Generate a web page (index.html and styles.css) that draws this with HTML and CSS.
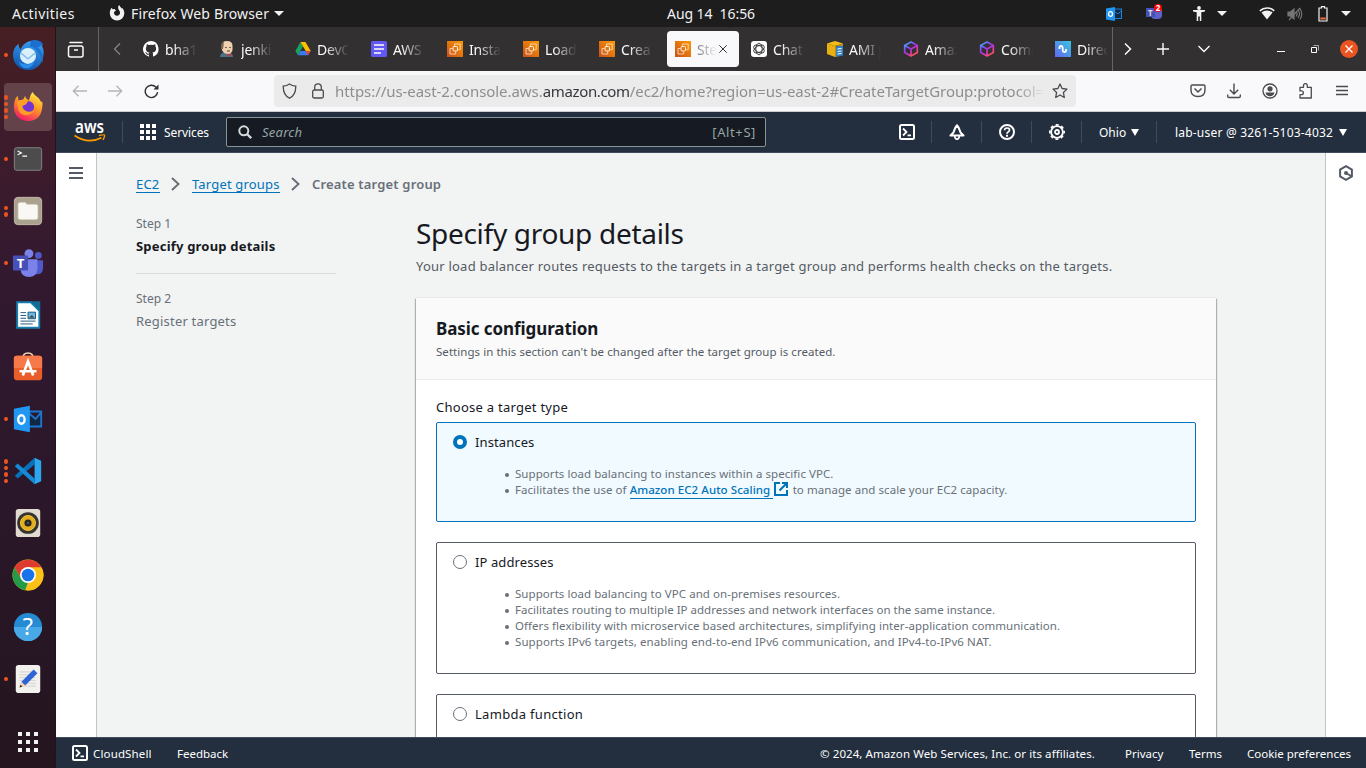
FILE: index.html
```html
<!DOCTYPE html>
<html lang="en">
<head>
<meta charset="utf-8">
<title>Create target group</title>
<link rel="stylesheet" href="styles.css">
</head>
<body>
<svg class="defs" aria-hidden="true">
  <defs>
    <linearGradient id="orange" x1="0" y1="1" x2="1" y2="0"><stop offset="0" stop-color="#c8511b"/><stop offset="1" stop-color="#ff9900"/></linearGradient>
    <linearGradient id="cube" x1="0" y1="0" x2="0.7" y2="1"><stop offset="0" stop-color="#20c5f5"/><stop offset=".5" stop-color="#a82cf5"/><stop offset="1" stop-color="#ff4f5f"/></linearGradient>
    <linearGradient id="fire" x1=".8" y1="0" x2=".3" y2="1"><stop offset="0" stop-color="#fff04a"/><stop offset=".45" stop-color="#ff9a24"/><stop offset="1" stop-color="#f5156b"/></linearGradient>
    <linearGradient id="wave" x1="0" y1="1" x2="1" y2="0"><stop offset="0" stop-color="#6366f1"/><stop offset="1" stop-color="#38c7e0"/></linearGradient>
    <linearGradient id="bird" x1=".7" y1="0" x2=".4" y2="1"><stop offset="0" stop-color="#3a9ff5"/><stop offset="1" stop-color="#0f56ac"/></linearGradient>
  </defs>
  <symbol id="ec2" viewBox="0 0 16 16"><path fill="url(#orange)" d="M0 0h16v16H0z"/><g fill="none" stroke="#fff" stroke-width=".9"><rect x="6" y="5.500" width="4.500" height="4.500" rx="1"/><path opacity=".75" d="M7.500 5V3h5.700v5.700h-2M5.500 7.500H3v5.500h5.700v-2.500"/></g></symbol>
  <symbol id="cubeicon" viewBox="0 0 16 16"><path fill="none" stroke="url(#cube)" stroke-width="1.700" stroke-linejoin="round" d="M8 1l6.300 3.500v7L8 15l-6.300-3.500v-7zM1.700 4.500L8 8l6.300-3.500M8 8v7"/></symbol>
  <symbol id="shell" viewBox="0 0 16 16"><rect x="1" y="1" width="14" height="14" rx="1.500" fill="none" stroke="#fff" stroke-width="2"/><path fill="none" stroke="#fff" stroke-width="1.800" d="M4 4.500L7.500 8 4 11.500M8.500 11.300H12"/></symbol>
</svg>

<header class="topbar">
  <span class="activities">Activities</span>
  <svg class="ff-mini" viewBox="0 0 16 16"><path fill="#f2f2f2" d="M8 15.500A7.200 7.200 0 0 1 .8 8.300C.8 5.800 1.600 4 2.800 2.700l.7 1.600 2-.3L7 5.500 5 7c-.3 2.500 1.400 4 3.300 3.800 2.200-.2 3.300-2.200 2.500-4.300C10.200 5 8.800 4 9.200 1.500 9.500 1 9.800.5 10.200.1c.5 1.600 2 2.400 2.600 3.400l.5-.5c1.300 1.500 2 3.300 2 5.300A7.200 7.200 0 0 1 8 15.500z"/></svg>
  <span class="appname">Firefox Web Browser</span>
  <i class="tri app-tri"></i>
  <span class="clock">Aug 14&nbsp; 16:56</span>
  <div class="tray">
    <svg class="t-outlook" viewBox="0 0 16 14"><rect x="8" y="2" width="7.500" height="9.500" fill="#102840" stroke="#1f7fd8" stroke-width="1"/><path d="M8 4l4 3 3-3" fill="none" stroke="#1f7fd8"/><path fill="#2196f3" d="M0 1.500L9 0v14L0 12.500z"/><ellipse cx="4.500" cy="7" rx="2" ry="2.400" fill="none" stroke="#fff" stroke-width="1.300"/></svg>
    <svg class="t-teams" viewBox="0 0 17 17"><path fill="#5b62c9" d="M5 6h11v5a4 4 0 0 1-4 4H9a4 4 0 0 1-4-4z"/><path fill="#4650b5" d="M0 4h9v9H0z"/><text x="2" y="11.500" font-size="8" font-weight="700" fill="#ddd">T</text><circle cx="12" cy="4" r="4" fill="#f00"/><text x="9.800" y="7" font-size="8" font-weight="700" fill="#fff">2</text></svg>
    <svg class="t-access" viewBox="0 0 12 15"><g fill="#f2f2f2"><circle cx="6" cy="2" r="1.900"/><path d="M0 4h12v1.500L8.300 6.300V15H6.800v-4.500H5.200V15H3.700V6.300L0 5.500z"/></g></svg>
    <i class="tri"></i>
    <svg class="t-wifi" viewBox="0 0 16 13"><path fill="#f2f2f2" d="M8 12.500L2.500 5.600a8.500 8.500 0 0 1 11 0z"/><path fill="none" stroke="#f2f2f2" stroke-width="1.600" d="M.8 3.800a10.500 10.500 0 0 1 14.400 0"/></svg>
    <svg class="t-vol" viewBox="0 0 16 14"><g stroke="#757575" fill="none" stroke-width="1.200"><path fill="#757575" d="M1 5h2.500L7 2v10L3.500 9H1z"/><path d="M9 4.500q2 2.500 0 5M11 3q3 4 0 8M13 1.500q3.500 5.500 0 11M2 13L13 1"/></g></svg>
    <svg class="t-bat" viewBox="0 0 10 16"><path fill="none" stroke="#f2f2f2" stroke-width="1.200" d="M1 2h2.500V.7h3V2H9v13H1z"/><path fill="#f26a3a" d="M2.300 11.500h5.400v2H2.300z"/></svg>
    <i class="tri"></i>
  </div>
</header>

<div class="desktop">
<nav class="dock">
  <div class="app"><span class="dots"><i></i></span>
    <svg viewBox="0 0 34 34"><path fill="url(#bird)" d="M1 17c0-5 2-9 6-12 0 3 1 5 2 6C12 4 19 0 27 2c4 1 6 3 5 6 2 3 2 7 1 11-1 8-8 14-16 14S1 27 1 17z"/><path fill="#1a6fd0" d="M20 2c6-2 12 0 13 4l-6 3c5 4 7 10 5 17-1-10-6-17-13-18z"/><circle cx="17" cy="18" r="8.500" fill="#d9effc"/><path d="M9.500 15l7.500 6 7.500-6" fill="none" stroke="#86bfe9" stroke-width="1.500"/><path fill="#2b8eea" d="M7 24c5 4 12 4 17-1-1 6-6 9-11 8-3-1-5-4-6-7z"/></svg></div>
  <div class="app current"><span class="dots"><i></i><i></i><i></i><i></i></span>
    <svg viewBox="0 0 34 34"><path fill="url(#fire)" d="M17 32C8 32 2 25 2 17.500 2 12 3 8 6 5l1 5 5-1 2-4c0 2 2 4 4 5 1-4 2-7 4-9 2 5 7 5 9 11l1-1c1 3 0 10-2 14-2 4-7 7-13 7z"/><circle cx="17" cy="17" r="6.500" fill="#7434cf"/><path fill="#ff9e24" d="M5 12c3-3 8-4 12-1l-2 3-4 2c1 6 8 8 13 4-3 7-13 8-17 1z"/></svg></div>
  <div class="app"><span class="dots"><i></i></span>
    <svg viewBox="0 0 34 34"><rect x="2.500" y="5" width="29" height="24" rx="2.500" fill="#4b4c4b" stroke="#858585"/><path d="M6 8.500l4 2-4 2M11 14h5" fill="none" stroke="#fff" stroke-width="1.200"/></svg></div>
  <div class="app"><span class="dots"><i></i><i></i></span>
    <svg viewBox="0 0 34 34"><rect x="2.500" y="2.500" width="29" height="29" rx="4" fill="#aaa18e" stroke="#c3bba9"/><path fill="#faf8f5" stroke="#dcd4c4" stroke-width=".7" d="M6.500 10q0-2 2-2h5q2 0 2 2h10q2 0 2 2v12q0 2-2 2h-17q-2 0-2-2z"/></svg></div>
  <div class="app"><span class="dots"><i></i></span>
    <svg viewBox="0 0 34 34"><circle cx="28" cy="9" r="3.600" fill="#5059c9"/><circle cx="18" cy="7" r="4.700" fill="#7b83eb"/><path fill="#5059c9" d="M23 14h10v8q0 7-7 7h-3z"/><path fill="#7b83eb" d="M9 13h18v11q-1 8-9 8t-9-8z"/><rect x="1" y="9" width="16" height="16" rx="1" fill="#4650b8"/><text class="icon-letter" x="5" y="22" font-size="14" fill="#fff">T</text></svg></div>
  <div class="app">
    <svg viewBox="0 0 34 34"><path fill="#fff" stroke="#167fae" stroke-width="2" d="M5.500 3.500H20l9 9v18H5.500z"/><path fill="#136b94" d="M20 2.500l10 10.500V2.500z"/><path stroke="#17527a" d="M9 14.500h6M9 17.500h6M9 20.500h6M9 23.500h16M9 26.500h13"/><path fill="#66b9e5" stroke="#17527a" d="M17 14h8v7h-8z"/><path fill="#594437" d="M18 20l3-3 3 3z"/></svg></div>
  <div class="app">
    <svg viewBox="0 0 34 34"><path d="M11.500 8q0-6 5.500-6t5.500 6" fill="none" stroke="#f4d6ad" stroke-width="1.600"/><rect x="2" y="5" width="30" height="26" rx="3" fill="#e95d2a"/><path fill="#f7794a" d="M2 18h30V8q0-3-3-3H5Q2 5 2 8z"/><path d="M11.500 26l5.500-15 5.500 15M8 21.500h18" fill="none" stroke="#fff" stroke-width="2.800"/></svg></div>
  <div class="app"><span class="dots"><i></i></span>
    <svg viewBox="0 0 34 34"><path d="M17 9h14v16H17zM17 10l8 7 6-7" fill="#102840" stroke="#1976d2" stroke-width="2"/><path fill="#2196f3" d="M2 6l17-3v28L2 28z"/><ellipse cx="10" cy="17.500" rx="3.400" ry="4.500" fill="none" stroke="#fff" stroke-width="2.500"/></svg></div>
  <div class="app"><span class="dots"><i></i><i></i><i></i><i></i></span>
    <svg viewBox="0 0 34 34"><path fill="#0872b9" d="M3 22l3 3 18-15V3z"/><path fill="#168bd5" d="M3 12l3-3 18 16v6z"/><path fill="#2ba7ef" d="M24 3l7 3v22l-7 3z"/></svg></div>
  <div class="app">
    <svg viewBox="0 0 34 34"><rect x="4" y="2" width="26" height="30" rx="3" fill="#e1dad1"/><circle cx="17" cy="17" r="11.500" fill="#36342e"/><circle cx="17" cy="17" r="8" fill="#e2ae20" stroke="#f5c63a"/><circle cx="17" cy="17" r="3.800" fill="#252525"/><circle cx="17" cy="17" r="1.300" fill="#555"/></svg></div>
  <div class="app">
    <svg viewBox="0 0 34 34"><circle cx="17" cy="17" r="16.500" fill="#fbc116"/><path fill="#dd3b30" d="M2.700 9A16.500 16.500 0 0 1 31.300 9H17l-7 12z"/><path fill="#249b49" d="M2.700 9l7.300 12 7 4-3 8.300A16.500 16.500 0 0 1 2.700 9z"/><path fill="#fbc116" d="M17 9h14.300A16.500 16.500 0 0 1 16 33.500l7.500-12.500z"/><circle cx="17" cy="17" r="8.500" fill="#fff"/><circle cx="17" cy="17" r="6.700" fill="#1a73e8"/></svg></div>
  <div class="app">
    <svg viewBox="0 0 34 34"><circle cx="17" cy="17" r="15" fill="#258bd2"/><path fill="#49a9e6" d="M2 17h30a15 15 0 0 1-30 0z"/><text x="11.500" y="26" font-size="25" fill="#fff">?</text></svg></div>
  <div class="app"><span class="dots"><i></i></span>
    <svg viewBox="0 0 34 34"><rect x="4" y="2" width="26" height="30" rx="3" fill="#f3f1ee"/><path stroke="#d1cfcd" d="M8 9.500h17M8 12.500h17M8 15.500h17M8 18.500h17M8 21.500h17M8 24.500h17"/><path fill="#fbd2a3" d="M8 26l2-6 4 4z"/><path fill="#2d63d6" d="M10 20L23 7l4 4-13 13z"/><path fill="#222" d="M8 26l1-3 2 2z"/></svg></div>
  <svg class="grid-icon" viewBox="0 0 20 20"><path fill="#f2f2f2" d="M0 0h4v4H0zM8 0h4v4H8zM16 0h4v4h-4zM0 8h4v4H0zM8 8h4v4H8zM16 8h4v4h-4zM0 16h4v4H0zM8 16h4v4H8zM16 16h4v4h-4z"/></svg>
</nav>

<main class="browser">
  <div class="tabs">
    <div class="tab-start"><svg viewBox="0 0 18 18"><path d="M3 1.500h12" stroke="#fbfbfe" stroke-width="1.500" stroke-linecap="round"/><rect x="1.500" y="5" width="14.500" height="11" rx="2" fill="none" stroke="#fbfbfe" stroke-width="1.500"/><path d="M7 9h4" stroke="#fbfbfe" stroke-width="1.500"/></svg></div>
    <svg class="scroll-left" viewBox="0 0 8 14"><path d="M7 1.500L1.500 7 7 12.500" fill="none" stroke="#858487" stroke-width="1.300"/></svg>
    <div class="tablist">
      <div class="tab"><svg viewBox="0 0 16 16"><path fill="#fff" d="M8 0a8 8 0 0 0-2.500 15.600c.4.100.5-.2.500-.4v-1.500c-2.200.5-2.700-1-2.700-1-.4-.9-.9-1.200-.9-1.200-.7-.5.1-.5.100-.5.800.1 1.200.8 1.200.8.700 1.300 1.900.9 2.300.7.100-.5.300-.9.500-1.100-1.800-.2-3.600-.9-3.600-4 0-.9.300-1.600.8-2.100-.1-.2-.4-1 .1-2.100 0 0 .7-.2 2.200.8a7.500 7.500 0 0 1 4 0c1.500-1 2.200-.8 2.200-.8.400 1.100.2 1.900.1 2.100.5.600.8 1.300.8 2.100 0 3.100-1.900 3.700-3.700 3.900.3.300.6.800.6 1.500v2.200c0 .2.100.5.500.4A8 8 0 0 0 8 0z"/></svg><span>bha1</span></div>
      <div class="tab"><svg viewBox="0 0 16 16"><path fill="#4d7286" d="M1 16q0-4 4-4.500h5q4 .5 4 4.500z"/><path fill="#efd1ae" d="M2.500 5q0-5 5.500-5t5.500 5v4q-1 4-4.500 4-4.500 0-6-4z"/><path fill="#7d6450" d="M2 8q-.500-6 3-8L4.500 5 4 8zM6 6h2v1H6zM10 6h2v1h-2z"/><path fill="#c43a3a" d="M8 12.500l2 1 2-1v3l-2-1-2 1z"/><path d="M8 10h3" stroke="#5b3b2a"/></svg><span>jenki</span></div>
      <div class="tab"><svg viewBox="0 0 16 16"><path fill="#18a35a" d="M5.500 1L8 5.300 3 14.300.4 10z"/><path fill="#ffbf00" d="M5.500 1h5l5.200 9h-5z"/><path fill="#397bf0" d="M3 14.300L5.500 10h10.200L13 14.300z"/><path fill="#e94335" d="M10.700 10h5L13 14.300z"/></svg><span>DevO</span></div>
      <div class="tab"><svg viewBox="0 0 16 16"><rect width="16" height="16" rx="1.500" fill="#6259f5"/><path d="M3 4h10M3 8h10M3 12h7" stroke="#fff" stroke-width="1.700"/></svg><span>AWS</span></div>
      <div class="tab"><svg><use href="#ec2"/></svg><span>Insta</span></div>
      <div class="tab"><svg><use href="#ec2"/></svg><span>Load</span></div>
      <div class="tab"><svg><use href="#ec2"/></svg><span>Crea</span></div>
      <div class="tab active"><svg><use href="#ec2"/></svg><span>Ste</span><svg class="close" viewBox="0 0 8 8"><path d="M.3.300l7.400 7.400M7.700.300L.3 7.700" stroke="#333" stroke-width="1"/></svg></div>
      <div class="tab"><svg viewBox="0 0 16 16"><rect width="16" height="16" rx="3" fill="#fff"/><g fill="none" stroke="#222" stroke-width=".8"><ellipse cx="8" cy="8" rx="3.200" ry="5.800"/><ellipse cx="8" cy="8" rx="3.200" ry="5.800" transform="rotate(60 8 8)"/><ellipse cx="8" cy="8" rx="3.200" ry="5.800" transform="rotate(120 8 8)"/></g></svg><span>Chat</span></div>
      <div class="tab"><svg viewBox="0 0 16 16"><path fill="#f5bd18" d="M0 2.500L8 0l8 2.500L8 5z"/><path fill="#eab010" d="M0 2.500L8 5v11l-8-3z"/><path fill="#c58d0a" d="M8 5l8-2.500V5H9v11H8z"/><path fill="#3281c4" d="M9 5.500l7-1v10L9 16z"/><path d="M10.500 8l4-.6M10.500 10.500l4-.5M10.500 13l4-.6" stroke="#fff"/></svg><span>AMI p</span></div>
      <div class="tab"><svg><use href="#cubeicon"/></svg><span>Amaz</span></div>
      <div class="tab"><svg><use href="#cubeicon"/></svg><span>Comp</span></div>
      <div class="tab last"><svg viewBox="0 0 16 16"><path fill="url(#wave)" d="M0 0h16v16H0z"/><path d="M4.500 8V6.500q0-1.500 1.500-1.500t1.700 1.500v3q.2 1.500 1.800 1.500t1.500-1.500V8" fill="none" stroke="#fff" stroke-width="1.800"/></svg><span>Direc</span></div>
    </div>
    <div class="tab-tools">
      <svg class="w-next" viewBox="0 0 8 14"><path d="M1 1.500L6.500 7 1 12.500" fill="none" stroke="#fbfbfe" stroke-width="1.500"/></svg>
      <svg class="w-plus" viewBox="0 0 12 12"><path d="M6 0v12M0 6h12" stroke="#fbfbfe" stroke-width="1.400"/></svg>
      <svg class="w-down" viewBox="0 0 14 8"><path d="M1.500 1L7 6.500 12.500 1" fill="none" stroke="#fbfbfe" stroke-width="1.400"/></svg>
      <svg class="w-min" viewBox="0 0 8 8"><path d="M0 6.500h8" stroke="#fff"/></svg>
      <svg class="w-max" viewBox="0 0 8 8"><path d="M.5 2.500h5v5h-5z" fill="none" stroke="#fff"/><path d="M2.500.5h5v5" fill="none" stroke="#aaa"/></svg>
      <svg class="w-close" viewBox="0 0 18 18"><circle cx="9" cy="9" r="9" fill="#e95420"/><path d="M5.500 5.500l7 7M12.500 5.500l-7 7" stroke="#fff" stroke-width="1.300"/></svg>
    </div>
  </div>

  <div class="toolbar">
    <svg class="back" viewBox="0 0 15 12"><path d="M15 6H1.500M6.500.8L1.300 6l5.200 5.200" fill="none" stroke="#b4b4b6" stroke-width="1.300"/></svg>
    <svg class="fwd" viewBox="0 0 15 12"><path d="M0 6h13.500M8.500.8L13.700 6l-5.200 5.200" fill="none" stroke="#b4b4b6" stroke-width="1.300"/></svg>
    <svg class="reload" viewBox="0 0 15 15"><path d="M13.600 8.200A6.200 6.200 0 1 1 12 3.200" fill="none" stroke="#2f2e33" stroke-width="1.400"/><path fill="#2f2e33" d="M14.500.5v5H9.500z"/></svg>
    <div class="urlbar">
      <svg class="shield" viewBox="0 0 15 16"><path d="M7.500 1c2 1.500 4 2 6.300 2.200 0 5.500-1 9.500-6.300 12C2.200 12.700 1.200 8.700 1.200 3.200 3.500 3 5.500 2.500 7.500 1z" fill="none" stroke="#4a4a4f" stroke-width="1.300"/></svg>
      <svg class="lock" viewBox="0 0 12 16"><rect x=".7" y="7" width="10.600" height="8" rx="1.500" fill="none" stroke="#4a4a4f" stroke-width="1.300"/><path d="M2.700 7V4.200a3.300 3.300 0 0 1 6.600 0V7" fill="none" stroke="#4a4a4f" stroke-width="1.300"/></svg>
      <span class="url">https://us-east-2.console.aws.<b>amazon.com</b>/ec2/home?region=us-east-2#CreateTargetGroup:protocol=</span>
      <svg class="star" viewBox="0 0 16 16"><path d="M8 1l2.100 4.500 4.900.6-3.600 3.400.9 5L8 12l-4.300 2.500.9-5L1 6.100l4.900-.6z" fill="none" stroke="#4a4a4f" stroke-width="1.300" stroke-linejoin="round"/></svg>
    </div>
    <div class="tools">
      <svg viewBox="0 0 16 16"><path d="M2.300 2h11.400q1.300 0 1.300 1.300V7q0 6.500-7 6.500T1 7V3.300Q1 2 2.300 2z" fill="none" stroke="#4a4a4f" stroke-width="1.400"/><path d="M4.500 5.500L8 9l3.500-3.500" fill="none" stroke="#4a4a4f" stroke-width="1.500"/></svg>
      <svg viewBox="0 0 16 16"><path d="M8 .5v10.300M3.800 6.800L8 11l4.200-4.200M1.700 11.500v1.700q0 1.300 1.300 1.300h10q1.300 0 1.300-1.300v-1.700" fill="none" stroke="#4a4a4f" stroke-width="1.400"/></svg>
      <svg viewBox="0 0 16 16"><circle cx="8" cy="8" r="7" fill="none" stroke="#4a4a4f" stroke-width="1.300"/><circle cx="8" cy="5.800" r="2.600" fill="#4a4a4f"/><path fill="#4a4a4f" d="M3.500 9.500h9q-1 3.800-4.500 3.800T3.500 9.500z"/></svg>
      <svg viewBox="0 0 16 16"><path d="M2 4.300h3.500V2.500a1.900 1.900 0 0 1 3.800 0v1.800h4V15H2v-3.300h1.500a1.900 1.900 0 0 0 0-3.800H2z" fill="none" stroke="#4a4a4f" stroke-width="1.300" stroke-linejoin="round"/></svg>
      <svg viewBox="0 0 16 16"><path d="M2 3.500h12M2 7.500h12M2 11.500h12" stroke="#4a4a4f" stroke-width="1.300"/></svg>
    </div>
  </div>

  <div class="awsnav">
    <svg class="logo" viewBox="0 0 32 22"><text x="1" y="12.300" font-size="17" font-weight="600" fill="#fff" textLength="29" lengthAdjust="spacingAndGlyphs">aws</text><path d="M.5 14.500q13.500 9 27 2.300" fill="none" stroke="#ff9900" stroke-width="1.800"/><path d="M25 14.500q5.300-1.300 5.600-.3.200 1.400-1.500 4.800" fill="none" stroke="#ff9900" stroke-width="1.400"/></svg>
    <i class="sep sep-logo"></i>
    <svg class="services-icon" viewBox="0 0 16 16"><path fill="#fff" d="M0 0h4v4H0zM6 0h4v4H6zM12 0h4v4h-4zM0 6h4v4H0zM6 6h4v4H6zM12 6h4v4h-4zM0 12h4v4H0zM6 12h4v4H6zM12 12h4v4h-4z"/></svg>
    <span class="services">Services</span>
    <div class="search">
      <svg viewBox="0 0 14 14"><circle cx="5.800" cy="5.800" r="4.500" fill="none" stroke="#d5dbdb" stroke-width="2"/><path d="M9 9l4.200 4.200" stroke="#d5dbdb" stroke-width="2.300"/></svg>
      <em>Search</em><span class="hint">[Alt+S]</span>
    </div>
    <div class="nav-icons">
      <span><svg><use href="#shell"/></svg></span>
      <span><svg viewBox="0 0 16 16"><path d="M8 1.300C6 3.300 5.500 6 4.500 8.500L1.500 11.500h13l-3-3C10.500 6 10 3.300 8 1.300z" fill="none" stroke="#fff" stroke-width="2" stroke-linejoin="round"/><path d="M5.700 12q.2 3.200 2.300 3.200t2.300-3.200" fill="none" stroke="#fff" stroke-width="1.700"/></svg></span>
      <span><svg viewBox="0 0 16 16"><circle cx="8" cy="8" r="7" fill="none" stroke="#fff" stroke-width="2"/><path d="M5.600 6.300q0-2.300 2.500-2.300t2.400 2q0 1.200-1.400 1.900Q8 8.400 8 9.700" fill="none" stroke="#fff" stroke-width="1.700"/><path fill="#fff" d="M7 10.700h2v2H7z"/></svg></span>
      <span><svg viewBox="0 0 16 16"><circle cx="8" cy="8" r="5.900" fill="none" stroke="#fff" stroke-width="1.900"/><circle cx="8" cy="8" r="7.200" fill="none" stroke="#fff" stroke-width="1.600" stroke-dasharray="3 2.655" stroke-dashoffset="1.500"/><circle cx="8" cy="8" r="2" fill="none" stroke="#fff" stroke-width="1.800"/></svg></span>
    </div>
    <span class="region">Ohio</span><i class="dtri"></i>
    <i class="sep sep-user"></i>
    <span class="user">lab-user @ 3261-5103-4032</span><i class="dtri"></i>
  </div>

  <div class="page">
    <aside class="rail"><svg viewBox="0 0 14 12"><path fill="#545b64" d="M0 0h14v2H0zM0 5h14v2H0zM0 10h14v2H0z"/></svg></aside>
    <section class="content">
      <div class="crumbs"><a>EC2</a><svg viewBox="0 0 9 14"><path d="M1 1l6.500 6L1 13" fill="none" stroke="#687078" stroke-width="2"/></svg><a class="c2">Target groups</a><svg viewBox="0 0 9 14"><path d="M1 1l6.500 6L1 13" fill="none" stroke="#687078" stroke-width="2"/></svg><b>Create target group</b></div>
      <div class="wizard">
        <div class="steps">
          <div class="step first"><small>Step 1</small><strong>Specify group details</strong></div>
          <div class="step"><small>Step 2</small><span>Register targets</span></div>
        </div>
        <div class="form">
          <h1>Specify group details</h1>
          <p class="lead">Your load balancer routes requests to the targets in a target group and performs health checks on the targets.</p>
          <div class="card">
            <div class="card-head"><h2>Basic configuration</h2><p>Settings in this section can't be changed after the target group is created.</p></div>
            <div class="card-body">
              <div class="label">Choose a target type</div>
              <div class="option selected">
                <div class="opt-title"><i class="radio"></i><span>Instances</span></div>
                <ul><li><span class="a1">Supports load balancing to instances within a specific VPC.</span></li><li><span>Facilitates the use of</span> <a>Amazon EC2 Auto Scaling</a><svg viewBox="0 0 14 14"><path d="M6 1H1v12h12V8M8 1h5v5M13 1L5.500 8.500" fill="none" stroke="#0073bb" stroke-width="2"/></svg> <span>to manage and scale your EC2 capacity.</span></li></ul>
              </div>
              <div class="option">
                <div class="opt-title"><i class="radio"></i><span>IP addresses</span></div>
                <ul><li><span>Supports load balancing to VPC and on-premises resources.</span></li><li><span class="b2">Facilitates routing to multiple IP addresses and network interfaces on the same instance.</span></li><li><span>Offers flexibility with microservice based architectures, simplifying inter-application communication.</span></li><li><span class="b4">Supports IPv6 targets, enabling end-to-end IPv6 communication, and IPv4-to-IPv6 NAT.</span></li></ul>
              </div>
              <div class="option"><div class="opt-title"><i class="radio"></i><span class="lambda">Lambda function</span></div></div>
            </div>
          </div>
        </div>
      </div>
    </section>
    <aside class="rail right"><svg viewBox="0 0 16 16"><path d="M8 1.200l5.900 3.400v6.800L8 14.800l-5.900-3.400V4.600z" fill="none" stroke="#545b64" stroke-width="2"/><circle cx="8" cy="8" r="2" fill="#545b64"/><path d="M8 8l5 3" stroke="#545b64" stroke-width="2"/></svg></aside>
  </div>

  <footer class="footer">
    <svg><use href="#shell"/></svg><span class="f1">CloudShell</span><span class="f2">Feedback</span>
    <span class="f3">© 2024, Amazon Web Services, Inc. or its affiliates.</span><span class="f4">Privacy</span><span class="f5">Terms</span><span class="f6">Cookie preferences</span>
  </footer>
</main>
</div>
</body>
</html>
```
FILE: styles.css
```css
* { box-sizing: border-box; }
body { margin: 0; width: 1366px; height: 768px; overflow: hidden; font-family: "Noto Sans", "Open Sans", sans-serif; font-size: 13px; white-space: nowrap; background: #fff; }
svg { display: block; flex: none; }
svg text { font-family: "Noto Sans", sans-serif; }
i { font-style: normal; }
.defs { width: 0; height: 0; position: absolute; }
h1, h2, p, ul { margin: 0; padding: 0; }
.icon-letter { font-weight: 700; }

.topbar { height: 27px; background: #1d1d1d; color: #f2f2f2; display: flex; align-items: center; padding-left: 12px; font-size: 14px; }
.activities { width: 97px; letter-spacing: .45px; }
.ff-mini { width: 16px; height: 16px; margin-right: 6px; margin-top: -2px; }
.appname { width: 139px; letter-spacing: .14px; }
.tri { width: 0; height: 0; border: 5px solid transparent; border-top-color: #f2f2f2; border-bottom: 0; flex: none; }
.app-tri { margin-left: 4px; }
.clock { margin-left: 383px; width: 90px; letter-spacing: -0.07px; }
.tray { display: flex; align-items: center; margin-left: 349px; flex: none; }
.t-outlook { width: 16px; height: 14px; }
.t-teams { width: 17px; height: 17px; margin-left: 24px; margin-top: -3px; overflow: visible; }
.t-access { width: 12px; height: 15px; margin: 0 12px 0 30px; }
.t-wifi { width: 16px; height: 13px; margin-left: 32px; }
.t-vol { width: 16px; height: 14px; margin-left: 12px; }
.t-bat { width: 10px; height: 16px; margin: 0 13px 0 15px; }

.desktop { display: flex; height: 741px; }
.dock { width: 56px; background: linear-gradient(#461f23, #3f1c2b 14%, #321930 35%, #2b172a 60%, #24151f); padding-left: 4px; border-right: 1px solid #24121b; }
.app { width: 48px; height: 48px; margin-bottom: 4px; border-radius: 4px; display: grid; place-items: center; position: relative; }
.app:first-child { margin-top: 4px; }
.app svg { width: 32px; height: 32px; }
.app.current { background: #634349; }
.dots { position: absolute; left: 0; top: 0; height: 48px; display: flex; flex-direction: column; justify-content: center; gap: 2px; }
.dots i { width: 4px; height: 4.500px; border-radius: 50%; background: #e95420; }
.grid-icon { width: 20px; height: 20px; margin: 29px 0 0 14px; }

.browser { width: 1310px; display: flex; flex-direction: column; }
.tabs { height: 44px; background: #323031; display: flex; align-items: center; color: #fbfbfe; }
.tab-start { width: 43px; height: 44px; border-right: 1px solid #666466; padding: 14px 0 0 11px; }
.tab-start svg { width: 18px; height: 18px; }
.scroll-left { width: 8px; height: 14px; margin-left: 14px; }
.tablist { display: flex; margin-left: 14px; gap: 4px; width: 978px; height: 44px; align-items: center; border-right: 1px solid #666466; }
.tab { width: 72px; height: 36px; padding-left: 8px; display: flex; align-items: center; font-size: 14px; border-radius: 4px; }
.tab > svg { width: 16px; height: 16px; margin-right: 6px; }
.tab span { width: 32px; overflow: hidden; letter-spacing: -.2px; mask-image: linear-gradient(90deg, #000 25%, transparent); margin-top: 1px; }
.tab.active { background: #f9f9fb; color: #15141a; }
.tab.active span { width: 20px; mask-image: linear-gradient(90deg, rgba(0,0,0,.55), transparent); }
.tab .close { width: 8px; height: 8px; margin: 0 0 0 2px; }
.tab.last { width: 61px; }
.tab-tools { display: flex; align-items: center; }
.w-next { width: 8px; height: 14px; margin-left: 11px; }
.w-plus { width: 12px; height: 12px; margin-left: 25px; }
.w-down { width: 14px; height: 8px; margin-left: 28px; }
.w-min { width: 8px; height: 8px; margin-left: 66px; }
.w-max { width: 8px; height: 8px; margin-left: 26px; }
.w-close { width: 18px; height: 18px; margin-left: 21px; }

.toolbar { height: 41px; background: #f9f9fb; border-bottom: 1px solid #ccc; display: flex; align-items: center; padding-left: 16px; }
.back, .fwd { width: 15px; height: 12px; }
.fwd { margin-left: 21px; }
.reload { width: 15px; height: 15px; margin-left: 21px; }
.urlbar { width: 802px; height: 32px; margin-left: 115px; background: #ebebec; border-radius: 4px; display: flex; align-items: center; }
.shield { width: 15px; height: 16px; margin-left: 8px; }
.lock { width: 12px; height: 16px; margin-left: 15px; }
.url { width: 710px; overflow: hidden; margin-left: 11px; font-size: 15px; letter-spacing: -.06px; color: #8e8e90; mask-image: linear-gradient(90deg, #000 96%, transparent); }
.url b { font-weight: 400; color: #38373d; letter-spacing: -.35px; }
.star { width: 16px; height: 16px; margin-left: 7px; }
.tools { display: flex; gap: 20px; margin-left: 114px; }
.tools svg { width: 16px; height: 16px; }

.awsnav { height: 41px; background: #232f3e; border-bottom: 1px solid #414d5c; color: #fff; font-size: 12px; display: flex; align-items: center; }
.logo { width: 32px; height: 22px; margin-left: 18px; }
.sep { width: 1px; height: 22px; background: #414b57; }
.sep-logo { margin-left: 16px; }
.services-icon { width: 16px; height: 16px; margin-left: 17px; }
.services { width: 46px; margin-left: 8px; margin-right: 16px; margin-top: 1px; letter-spacing: -.1px; }
.search { width: 540px; height: 30px; border: 1px solid #879596; border-radius: 2px; background: #161a22; color: #95a5a6; display: flex; align-items: center; padding: 0 10px 0 11px; font-size: 13px; }
.search svg { width: 14px; height: 14px; margin-right: 10px; }
.search em { letter-spacing: .25px; }
.hint { margin-left: auto; letter-spacing: .6px; margin-right: -1px; }
.nav-icons { display: flex; margin-left: 116px; }
.nav-icons span { width: 50px; height: 22px; border-right: 1px solid #414b57; display: grid; place-items: center; }
.nav-icons svg { width: 16px; height: 16px; }
.region { margin-left: 17px; width: 26px; margin-top: 1px; }
.dtri { border: 4.500px solid transparent; border-top: 7px solid #fff; border-bottom: 0; margin-left: 6px; }
.sep-user { margin-left: 17px; }
.user { width: 158px; margin-left: 18px; margin-top: 1px; letter-spacing: .2px; }

.page { height: 584px; display: flex; overflow: hidden; background: #f2f3f3; }
.rail { width: 40px; background: #fff; padding: 14px 0 0 13px; }
.rail svg { width: 14px; height: 12px; }
.content { width: 1230px; border-left: 1px solid #bfc4c4; border-right: 1px solid #bfc4c4; padding-left: 39px; color: #545b64; }
.rail.right { padding: 12px 0 0 12px; }
.rail.right svg { width: 16px; height: 16px; }
.crumbs { display: flex; align-items: center; height: 20px; margin-top: 21px; letter-spacing: .17px; }
a { color: #0073bb; border-bottom: 1px solid #0073bb; }
.crumbs a { line-height: 16px; width: 24px; }
.crumbs .c2 { width: 88px; }
.crumbs svg { width: 9px; height: 14px; margin: 0 12px 0 11px; }
.crumbs b { font-weight: 600; color: #687078; }
.wizard { display: flex; margin-top: 21px; }
.steps { width: 280px; }
.step { width: 200px; height: 75px; color: #687078; }
.step.first { height: 59px; border-bottom: 1px solid #d5dbdb; margin-bottom: 16px; }
small { display: block; font-size: 12px; line-height: 18px; }
.step strong, .step span { display: block; line-height: 20px; margin-top: 3px; font-size: 13px; letter-spacing: .2px; }
.step strong { color: #16191f; }
.form { width: 800px; }
h1 { font-weight: 400; font-size: 28px; line-height: 36px; color: #16191f; letter-spacing: -.3px; }
.lead { line-height: 20px; margin-top: 5px; letter-spacing: .22px; }
.card { margin-top: 22px; background: #fff; box-shadow: 0 -1px 0 #e6e9e9, 1px 1px 1px rgba(0,28,36,.3), -1px 1px 1px rgba(0,28,36,.3); height: 600px; }
.card-head { height: 82px; background: #fafafa; border-bottom: 1px solid #eaeded; padding: 19px 20px 0; }
h2 { font-size: 17px; line-height: 23px; color: #16191f; font-weight: 700; letter-spacing: -.08px; }
.card-head p { font-size: 11.500px; line-height: 16px; margin-top: 4px; letter-spacing: .05px; }
.card-body { padding: 17px 20px; }
.label { line-height: 20px; color: #16191f; margin-bottom: 5px; letter-spacing: .26px; }
.option { height: 132px; border: 1px solid #545b64; border-radius: 2px; margin-bottom: 20px; padding: 9px 16px; color: #687078; }
.option.selected { height: 100px; background: #f1faff; border-color: #0073bb; }
.opt-title { display: flex; align-items: center; height: 20px; color: #16191f; letter-spacing: .1px; }
.opt-title .lambda { letter-spacing: .3px; }
.radio { width: 14px; height: 14px; border: 1px solid #687078; border-radius: 50%; margin-right: 8px; background: #fff; }
.selected .radio { border: 4.500px solid #0073bb; }
ul { list-style: none; margin-top: 14px; padding-left: 52px; }
li { height: 16px; line-height: 16px; font-size: 11.500px; letter-spacing: .06px; display: flex; align-items: center; }
li::before { content: ""; width: 4px; height: 4px; border-radius: 50%; background: #687078; margin-right: 6px; margin-top: 1px; }
li .b2 { letter-spacing: .02px; }
li .b4 { letter-spacing: .1px; }
li a { height: 17px; margin: 1px 1px 0 3px; width: 143px; font-weight: 500; }
li svg { width: 14px; height: 14px; margin-right: 5px; margin-top: -2px; }

.footer { height: 31px; background: #232f3e; border-top: 1px solid #414d5c; color: #fff; font-size: 11.500px; display: flex; align-items: center; padding-left: 16px; }
.footer svg { width: 16px; height: 16px; margin-right: 5px; }
.f1 { width: 84px; letter-spacing: .15px; }
.f2 { width: 643px; }
.f3 { width: 305px; letter-spacing: .08px; }
.f4 { width: 64px; }
.f5 { width: 58px; }
```
